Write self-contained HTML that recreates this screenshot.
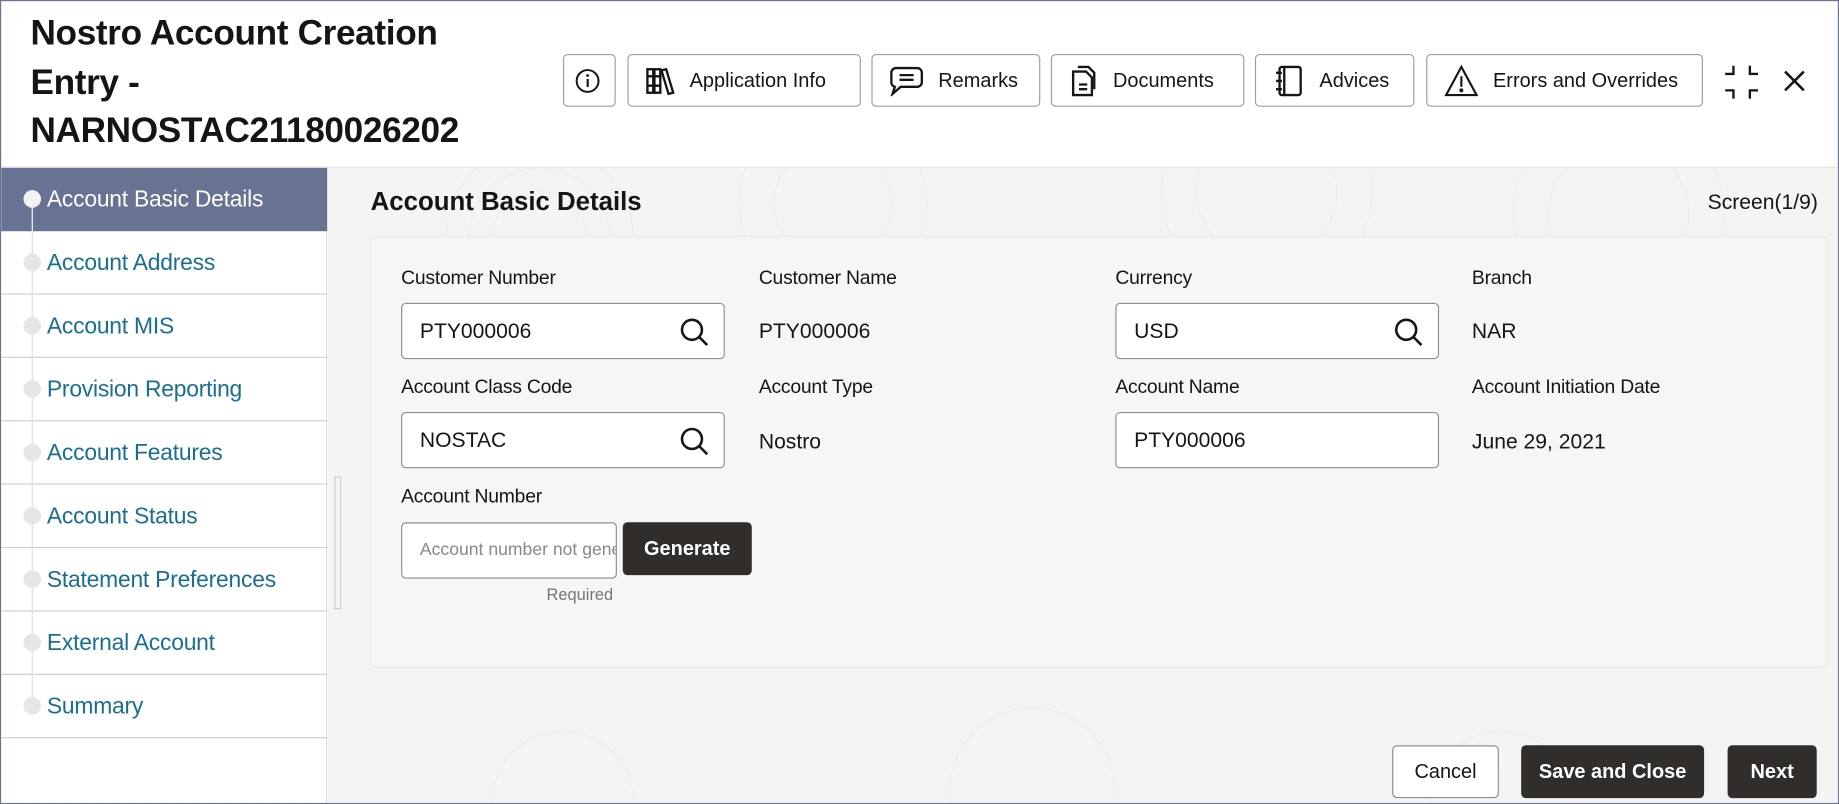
<!DOCTYPE html>
<html><head><meta charset="utf-8"><style>
*{box-sizing:border-box;margin:0;padding:0}
html,body{width:1839px;height:804px;overflow:hidden;background:#fff;font-family:"Liberation Sans",sans-serif}
#w{position:absolute;left:0;top:0;width:1568px;height:685px;transform:scale(1.17283,1.1737);transform-origin:0 0;border:1px solid #6a7393;background:#fff;overflow:hidden}
.a{position:absolute}
.title{left:25px;top:7px;font-size:30px;font-weight:bold;line-height:41.5px;color:#161513;letter-spacing:-0.3px}
.tb{position:absolute;top:45px;height:45px;border:1px solid #9e9e9e;border-radius:4px;background:#fff;display:flex;align-items:center;font-size:17px;color:#161513;padding-left:14px}
.tb svg{margin-right:12px}
.nav{left:0;top:142px;width:278px;height:544px;background:#fff;border-right:1px solid #ddd}
.ni{position:absolute;left:0;width:278px;height:54px;border-bottom:1px solid #cfcfcf;font-size:19.5px;color:#1a6e8f;padding-left:39px;line-height:54px;letter-spacing:-0.2px}
.ni .d{position:absolute;left:19px;top:19px;width:15px;height:15px;border-radius:50%;background:#e6e6e6}
.ni .l{position:absolute;left:26px;top:0;width:1px;height:54px;background:#ddd}
.main{left:279px;top:142px;width:1289px;height:544px;background:#f5f4f2}
.panel{left:314px;top:200px;width:1244px;height:368px;background:#f7f6f4;border:1px solid #ebe9e6;border-radius:6px}
.lb{position:absolute;font-size:16.5px;color:#161513;letter-spacing:-0.2px}
.vl{position:absolute;font-size:18px;color:#161513}
.in{position:absolute;width:276px;height:48px;border:1px solid #8e8e8e;border-radius:4px;background:#fff;font-size:18px;line-height:46px;padding-left:15px;color:#161513}
.in svg{position:absolute;right:12px;top:11px}
.btn{position:absolute;height:45px;border-radius:4px;font-size:17px;font-weight:bold;color:#fff;background:#312d2a;text-align:center;line-height:45px}
</style></head><body><div id="w">
<div class="a title">Nostro Account Creation<br>Entry -<br>NARNOSTAC21180026202</div>
<div class="tb" style="left:479px;width:45px;padding-left:9px"><svg width="26" height="26" viewBox="0 0 26 26"><circle cx="13" cy="13" r="11" fill="none" stroke="#161513" stroke-width="2"/><rect x="12" y="11" width="2.2" height="8" fill="#161513"/><circle cx="13" cy="7.5" r="1.4" fill="#161513"/></svg></div>
<div class="tb" style="left:534px;width:199px"><svg width="26" height="24" viewBox="0 0 26 24" fill="none" stroke="#161513" stroke-width="2"><rect x="2" y="2" width="5" height="20"/><rect x="8" y="2" width="5" height="20"/><path d="M14 3l4-1 6 20-4 1z"/><path d="M2 8h11M2 16h11"/></svg>Application Info</div>
<div class="tb" style="left:742px;width:144px"><svg width="30" height="26" viewBox="0 0 30 26" fill="none" stroke="#161513" stroke-width="2"><path d="M6 2h18a4 4 0 0 1 4 4v8a4 4 0 0 1-4 4H10l-7 6 2-6a4 4 0 0 1-3-4V6a4 4 0 0 1 4-4z"/><path d="M9 8h12M9 12h12"/></svg>Remarks</div>
<div class="tb" style="left:895px;width:165px"><svg width="26" height="28" viewBox="0 0 26 28" fill="none" stroke="#161513" stroke-width="2"><path d="M8 2h9l5 5v14"/><path d="M4 6h11l5 5v15H4z"/><path d="M9 17h7M9 21h7"/></svg>Documents</div>
<div class="tb" style="left:1069px;width:136px"><svg width="28" height="28" viewBox="0 0 28 28" fill="none" stroke="#161513" stroke-width="2"><rect x="6" y="2" width="18" height="24" rx="2"/><path d="M10 2v24M3 7h5M3 14h5M3 21h5"/></svg>Advices</div>
<div class="tb" style="left:1215px;width:236px"><svg width="30" height="28" viewBox="0 0 30 28" fill="none" stroke="#161513" stroke-width="1.8"><path d="M15 2L2 26h26z"/><path d="M15 10v9"/><circle cx="15" cy="22" r=".8" fill="#161513"/></svg>Errors and Overrides</div>
<svg class="a" style="left:1469px;top:54px" width="30" height="30" viewBox="0 0 30 30" fill="none" stroke="#161513" stroke-width="2"><path d="M8 1v7H1M22 1v7h7M8 29v-7H1M22 29v-7h7"/></svg>
<svg class="a" style="left:1519px;top:58px" width="20" height="20" viewBox="0 0 20 20" stroke="#161513" stroke-width="2.2"><path d="M2 2l16 16M18 2L2 18"/></svg>
<div class="a" style="left:0;top:141px;width:1568px;height:1px;background:#e0e0e0"></div>
<div class="a main">
<svg width="1289" height="544" style="position:absolute;left:0;top:0;opacity:.35" fill="none" stroke="#e3e1de" stroke-width="1">
<circle cx="180" cy="60" r="40"/><circle cx="180" cy="60" r="60"/><circle cx="180" cy="60" r="80"/><circle cx="430" cy="30" r="50"/><circle cx="430" cy="30" r="80"/><circle cx="800" cy="20" r="60"/><circle cx="800" cy="20" r="90"/><circle cx="1100" cy="40" r="60"/><circle cx="1100" cy="40" r="90"/><circle cx="200" cy="540" r="60"/><circle cx="600" cy="530" r="70"/><circle cx="1000" cy="540" r="60"/></svg>
</div>
<div class="a nav">
<div class="ni" style="top:0;background:#687394;color:#fff;border-bottom:none"><span class="l" style="background:#fff;top:27px;height:27px"></span><span class="d" style="background:#f2f2f2"></span>Account Basic Details</div>
<div class="ni" style="top:54px"><span class="l"></span><span class="d"></span>Account Address</div>
<div class="ni" style="top:108px"><span class="l"></span><span class="d"></span>Account MIS</div>
<div class="ni" style="top:162px"><span class="l"></span><span class="d"></span>Provision Reporting</div>
<div class="ni" style="top:216px"><span class="l"></span><span class="d"></span>Account Features</div>
<div class="ni" style="top:270px"><span class="l"></span><span class="d"></span>Account Status</div>
<div class="ni" style="top:324px"><span class="l"></span><span class="d"></span>Statement Preferences</div>
<div class="ni" style="top:378px"><span class="l"></span><span class="d"></span>External Account</div>
<div class="ni" style="top:432px"><span class="l" style="height:27px"></span><span class="d"></span>Summary</div>
</div>
<div class="a" style="left:284px;top:405px;width:6px;height:113px;border:1px solid #ccc;background:#f4f4f4"></div>
<div class="a" style="left:315px;top:158px;font-size:22px;font-weight:bold;color:#161513">Account Basic Details</div>
<div class="a" style="left:1455px;top:161px;font-size:18px;color:#161513">Screen(1/9)</div>
<div class="a panel"></div>
<div class="lb" style="left:341px;top:227px">Customer Number</div>
<div class="lb" style="left:646px;top:227px">Customer Name</div>
<div class="lb" style="left:950px;top:227px">Currency</div>
<div class="lb" style="left:1254px;top:227px">Branch</div>
<div class="in" style="left:341px;top:257px">PTY000006<svg width="26" height="26" viewBox="0 0 26 26" fill="none" stroke="#161513" stroke-width="2.2"><circle cx="11" cy="11" r="8.5"/><path d="M17 17l7 7"/></svg></div>
<div class="vl" style="left:646px;top:271px">PTY000006</div>
<div class="in" style="left:950px;top:257px">USD<svg width="26" height="26" viewBox="0 0 26 26" fill="none" stroke="#161513" stroke-width="2.2"><circle cx="11" cy="11" r="8.5"/><path d="M17 17l7 7"/></svg></div>
<div class="vl" style="left:1254px;top:271px">NAR</div>
<div class="lb" style="left:341px;top:320px">Account Class Code</div>
<div class="lb" style="left:646px;top:320px">Account Type</div>
<div class="lb" style="left:950px;top:320px">Account Name</div>
<div class="lb" style="left:1254px;top:320px">Account Initiation Date</div>
<div class="in" style="left:341px;top:350px">NOSTAC<svg width="26" height="26" viewBox="0 0 26 26" fill="none" stroke="#161513" stroke-width="2.2"><circle cx="11" cy="11" r="8.5"/><path d="M17 17l7 7"/></svg></div>
<div class="vl" style="left:646px;top:365px">Nostro</div>
<div class="in" style="left:950px;top:350px">PTY000006</div>
<div class="vl" style="left:1254px;top:365px">June 29, 2021</div>
<div class="lb" style="left:341px;top:413px">Account Number</div>
<div class="in" style="left:341px;top:444px;width:184px;font-size:15px;color:#8a8886;overflow:hidden;white-space:nowrap">Account number not generated</div>
<div class="btn" style="left:530px;top:444px;width:110px">Generate</div>
<div class="a" style="left:465px;top:497px;font-size:14px;color:#757575">Required</div>
<div class="btn" style="left:1186px;top:634px;width:91px;background:#fff;color:#161513;border:1px solid #8e8e8e;font-weight:normal;line-height:43px">Cancel</div>
<div class="btn" style="left:1296px;top:634px;width:156px">Save and Close</div>
<div class="btn" style="left:1472px;top:634px;width:76px">Next</div>
</div></body></html>
